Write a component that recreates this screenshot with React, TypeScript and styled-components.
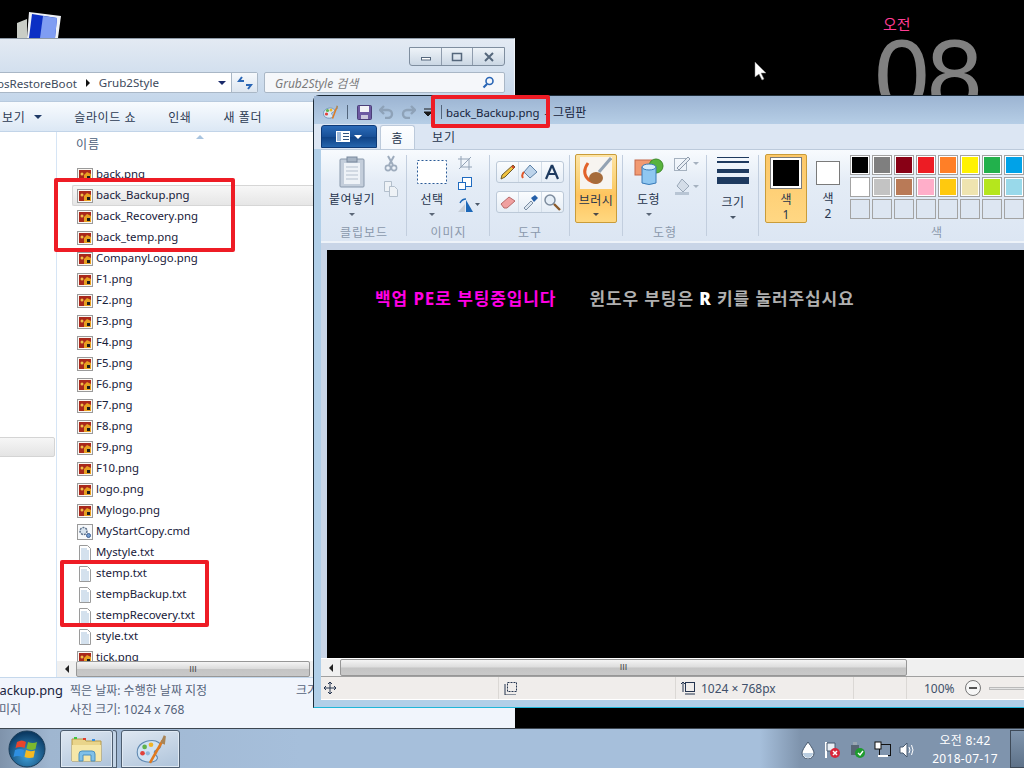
import React from 'react';
import styled, { createGlobalStyle } from 'styled-components';

const Global = createGlobalStyle`
  html, body { margin: 0; padding: 0; background: #000; overflow: hidden; }
  * { box-sizing: border-box; }
  body { font-family: "Noto Sans", "Noto Sans CJK KR", sans-serif; font-size: 12px; color: #1e2a3c; }
`;

const KR = `"Noto Sans", "Noto Sans CJK KR", sans-serif`;

const Desktop = styled.div`position: relative; width: 1024px; height: 768px; overflow: hidden; background: #000;`;
const DesktopIcon = styled.svg`position: absolute; left: 16px; top: 10px;`;
const AmPm = styled.div`position: absolute; left: 883px; top: 14px; color: #ff3d94; font-size: 15px; line-height: 20px;`;
const BigClock = styled.div`position: absolute; left: 872px; top: 31px; color: #808080; font: 400 94px/94px "DejaVu Sans", sans-serif; letter-spacing: -7px;`;
const Cursor = styled.svg`position: absolute; left: 754px; top: 61px; z-index: 9;`;

/* explorer */
const Explorer = styled.section`
  position: absolute; left: -200px; top: 38px; width: 715px; height: 690px;
  display: flex; flex-direction: column; border-top: 1px solid #8d99a6; border-right: 1px solid #eef3f9;
  background: linear-gradient(#e3eaf3, #c3d6ea 64px);
`;
const ExplorerTitle = styled.div`height: 31px; display: flex; justify-content: flex-end; padding: 8px 9px 0 0;`;
const WinControls = styled.div`display: flex; height: 19px; border: 1px solid #7f8e9f; border-radius: 0 0 3px 3px; background: linear-gradient(#eef3f8, #cbd7e4);`;
const WinBtn = styled.div<{ $w: number }>`
  width: ${p => p.$w}px; display: flex; align-items: center; justify-content: center;
  border-right: 1px solid #8f9cad; &:last-child { border-right: 0; }
`;
const AddressRow = styled.div`height: 32px; display: flex; gap: 6px; padding: 2px 9px 8px 0;`;
const AddressBox = styled.div`flex: 0 0 458px; display: flex; align-items: center; background: #fff; border: 1px solid #a9b7c6; border-radius: 2px; color: #3c4a5c;`;
const PathText = styled.div`flex: 0 0 358px; display: flex; justify-content: flex-end; gap: 9px; align-items: center; white-space: nowrap; overflow: hidden; font-size: 11.6px;`;
const Spacer = styled.div`flex: 1;`;
const DropTri = styled.i<{ $c?: string; $s?: number }>`
  display: inline-block; width: 0; height: 0; flex: none;
  border-left: ${p => p.$s ?? 4}px solid transparent; border-right: ${p => p.$s ?? 4}px solid transparent;
  border-top: ${p => p.$s ?? 4}px solid ${p => p.$c ?? '#1a2a6a'};
`;
const RightTri = styled.i`border-top: 4px solid transparent; border-bottom: 4px solid transparent; border-left: 4px solid #111; flex: none;`;
const RefreshBtn = styled.div`width: 26px; height: 100%; margin-left: 5px; border-left: 1px solid #a9b7c6; display: flex; align-items: center; justify-content: center; background: linear-gradient(#f6f9fc, #dde6f0);`;
const SearchBox = styled.div`flex: 1; display: flex; align-items: center; justify-content: space-between; padding: 0 9px 0 10px; background: #f5f7fa; border: 1px solid #a9b7c6; border-radius: 2px; color: #7a7a7a; font-style: italic;`;
const ExplorerToolbar = styled.div`height: 31px; display: flex; align-items: center; gap: 32px; padding-left: 202px; background: linear-gradient(#f8fbfe, #dce8f5); border-top: 1px solid #b8cade; border-bottom: 1px solid #c2d4e8; color: #2b3a52;`;
const ToolItem = styled.span`display: inline-flex; align-items: center; gap: 9px; letter-spacing: .6px;`;
const ExplorerMain = styled.div`height: 545px; display: flex; background: #fff;`;
const NavPane = styled.nav`flex: 0 0 257px; padding-top: 305px; border-right: 1px solid #d6e5f5; overflow: hidden;`;
const NavRow = styled.div<{ $end?: number; $sel?: boolean }>`
  height: ${p => (p.$sel ? 20 : 21)}px; display: flex; align-items: center; justify-content: flex-end; white-space: nowrap;
  padding-right: ${p => p.$end ?? 0}px; color: #26324a;
  margin-right: ${p => (p.$sel ? 1 : 0)}px; margin-bottom: ${p => (p.$sel ? 1 : 0)}px;
  ${p => p.$sel && 'background: linear-gradient(#f6f6f6, #e4e4e4); border: 1px solid #d4d4d4; border-radius: 2px;'}
`;
const ListCol = styled.div`flex: 1; min-width: 0; display: flex; flex-direction: column; position: relative;`;
const ListHead = styled.div`height: 32px; padding: 4px 0 0 19px; color: #4c607a; font-size: 12px; line-height: 18px; letter-spacing: 1px;`;
const SortArrow = styled.i`position: absolute; left: 139px; top: 3px; border-left: 4px solid transparent; border-right: 4px solid transparent; border-bottom: 4px solid #a9c4df;`;
const Rows = styled.div`flex: 1; overflow: hidden; padding-left: 15px; font-size: 11.4px;`;
const FileRow = styled.div<{ $sel?: boolean }>`
  height: 21px; display: flex; align-items: center; gap: 3px; padding-left: ${p => (p.$sel ? 4 : 5)}px; white-space: nowrap; color: #17203a;
  ${p => p.$sel && 'background: linear-gradient(#f7f7f7, #e6e6e6); border: 1px solid #d6d6d6; border-right: 0; border-radius: 2px;'}
`;
const FileName = styled.span`margin-top: -2px;`;
const HScroll = styled.div<{ $h: number }>`
  height: ${p => p.$h}px; flex: none; display: flex; align-items: center; background: #f0f0f0;
`;
const ScrollBtn = styled.div<{ $w: number }>`flex: 0 0 ${p => p.$w}px; display: flex; align-items: center; justify-content: center;`;
const LeftTri = styled.i`border-top: 4px solid transparent; border-bottom: 4px solid transparent; border-right: 4px solid #222;`;
const Thumb = styled.div<{ $w: number }>`
  flex: 0 0 ${p => p.$w}px; height: 100%; border: 1px solid #979797; border-radius: 2px; display: flex; align-items: center; justify-content: center;
  background: linear-gradient(#f4f4f4, #dcdcdc 48%, #c4c4c4 52%, #c9c9c9);
  color: #444; font: 9px/9px "Liberation Sans", sans-serif; letter-spacing: 0;
`;
const Details = styled.div`height: 51px; flex: none; display: grid; grid-template-columns: 270px 226px 1fr; grid-auto-rows: 19px; padding-top: 3px; background: #f1f5fc; border-top: 1px solid #c5d8ec; color: #55637a; white-space: nowrap;`;
const DetailName = styled.div<{ $pr: number; $dark?: boolean }>`text-align: right; padding-right: ${p => p.$pr}px; font-size: ${p => (p.$dark ? 12.9 : 12)}px; color: ${p => (p.$dark ? '#1b2440' : '#55637a')};`;
const DetailValue = styled.div``;

/* paint */
const Paint = styled.section`
  position: absolute; left: 313px; top: 95px; width: 760px; height: 613px; display: flex; flex-direction: column;
  background: #b1cfe8; border: 1px solid #1d2b38; border-bottom: 1px solid #1fb6d8; border-radius: 6px 0 0 0;
`;
const QuickBar = styled.div`height: 28px; flex: none; display: flex; align-items: center; padding: 4px 0 0 9px; background: linear-gradient(#9cb4d2, #b6cee6); color: #16233c;`;
const QuickIcon = styled.svg<{ $mr: number }>`flex: none; margin-right: ${p => p.$mr}px;`;
const QuickSep = styled.span<{ $mr: number }>`width: 1px; height: 14px; background: #52657c; margin-right: ${p => p.$mr}px;`;
const PaintTitle = styled.span`white-space: nowrap; font-size: 11.4px; word-spacing: 2px; margin-left: -2px;`;
const TitleApp = styled.span`font-size: 12px;`;
const TabRow = styled.div`height: 25px; flex: none; display: flex; align-items: flex-end; padding-left: 7px; background: #dce6f3; color: #25344c;`;
const AppBtn = styled.div`width: 56px; height: 23px; margin: 0 3px 1px 0; border: 1px solid #0d3a78; border-radius: 3px 3px 0 0; display: flex; align-items: center; justify-content: center; gap: 4px; background: linear-gradient(#2a6bb9, #185098 50%, #0f4387 55%, #2565ad);`;
const Tab = styled.div<{ $on?: boolean }>`
  width: ${p => (p.$on ? 35 : 58)}px; height: 24px; display: flex; align-items: center; justify-content: center; letter-spacing: 1px;
  ${p => p.$on && 'background: linear-gradient(#fdfeff, #f3f7fc); border: 1px solid #bccadb; border-bottom: 0; border-radius: 3px 3px 0 0;'}
`;
const Ribbon = styled.div`height: 94px; flex: none; display: flex; margin-left: 7px; padding-top: 5px; background: linear-gradient(#f8fbfe, #e4ecf6 35%, #dce6f3); border-top: 1px solid #bccadb; border-bottom: 2px solid #eef3f9;`;
const Group = styled.div<{ $w: number; $last?: boolean }>`
  flex: 0 0 ${p => p.$w}px; height: 86px; display: flex; flex-direction: column;
  ${p => !p.$last && 'background: linear-gradient(#c2cede, #c2cede) right top / 1px 81px no-repeat;'}
`;
const GroupBody = styled.div`flex: 1; min-height: 0; display: flex; position: relative;`;
const GroupLabel = styled.div`height: 19px; padding-top: 3px; text-align: center; color: #8a98ab; line-height: 15px; letter-spacing: 1px;`;
const BigTool = styled.div<{ $w: number; $on?: boolean }>`
  flex: 0 0 ${p => p.$w}px; height: 66px; display: flex; flex-direction: column; align-items: center; color: #26344c; line-height: 15px; letter-spacing: .5px; white-space: nowrap; border-radius: 2px;
  ${p => p.$on && 'margin: -1px 0 0 5px; height: 69px !important; background: linear-gradient(#fde4a6, #fbcf6f 45%, #ffc45e 60%, #ffd880); border: 1px solid #c99c3a;'}
`;
const BigIcon = styled.div<{ $h: number }>`height: ${p => p.$h}px; flex: none; display: flex; align-items: center; justify-content: center;`;
const ToolText = styled.span<{ $mt: number }>`margin-top: ${p => p.$mt}px;`;
const Tri = styled(DropTri)<{ $mt: number }>`margin-top: ${p => p.$mt}px;`;
const MiniCol = styled.div<{ $gap: number; $start?: boolean }>`display: flex; flex-direction: column; gap: ${p => p.$gap}px; align-items: ${p => (p.$start ? 'flex-start' : 'center')}; flex: none;`;
const ToolGrid = styled.div`display: flex; flex-direction: column; gap: 8px; padding: 6px 0 0 6px;`;
const ToolStrip = styled.div`display: flex; height: 22px; width: 68px; border: 1px solid #bcc9d8; border-radius: 3px; background: linear-gradient(#fafcfe, #e5edf6);`;
const ToolCell = styled.div`flex: 1; display: flex; align-items: center; justify-content: center; border-right: 1px solid #d3dde8; &:last-child { border-right: 0; }`;
const SizeLines = styled.div`display: flex; flex-direction: column; width: 32px; height: 36px; padding-top: 2px;`;
const SizeLine = styled.i<{ $h: number; $mb: number }>`display: block; flex: none; height: ${p => p.$h}px; margin-bottom: ${p => p.$mb}px; background: #1e3a5f;`;
const ColorBig = styled.div<{ $on?: boolean }>`
  flex: 0 0 42px; height: 69px; margin-top: -1px; display: flex; flex-direction: column; align-items: center; line-height: 15px; color: #27364e;
  ${p => p.$on && 'padding-top: 2px; margin-left: 6px; border: 1px solid #c99c3a; border-radius: 2px; background: linear-gradient(#fdc868, #ffd783);'}
`;
const ColorWell = styled.div<{ $s: number; $bg: string; $mt: number }>`
  width: ${p => p.$s}px; height: ${p => p.$s}px; flex: none; margin: ${p => p.$mt}px 0 3px; background: ${p => p.$bg};
  border: 1px solid #7a7a7a; box-shadow: inset 0 0 0 2px #fff;
`;
const ColorCaption = styled.span<{ $mt?: number }>`margin-top: ${p => p.$mt ?? 0}px;`;
const Palette = styled.div`display: grid; grid-template-columns: repeat(10, 20px); grid-auto-rows: 20px; gap: 2px; margin-left: 1px;`;
const Swatch = styled.div<{ $c?: string }>`border: 1px solid #a3a3a3; box-shadow: inset 0 0 0 1px #fff; background: ${p => p.$c ?? '#dde6f2'};
  ${p => !p.$c && 'box-shadow: none;'}`;
const CanvasArea = styled.div`flex: 1; min-height: 0; margin-left: 7px; padding: 7px 0 0 6px; background: #c9d5e7;`;
const Canvas = styled.div`height: 100%; background: #000; padding: 36px 0 0 48px; display: flex; gap: 33px; font: bold 17px/26px ${KR}; letter-spacing: .9px; white-space: nowrap;`;
const Magenta = styled.span`color: #ff00e4;`;
const Gray = styled.span`color: #b0b0b0; b { color: #fff; }`;
const PaintScroll = styled(HScroll)`margin-left: 7px; border-top: 1px solid #fff;`;
const PaintStatus = styled.div`height: 24px; flex: none; margin-left: 7px; display: flex; background: #f0edeb; border-top: 1px solid #a0a0a0; color: #40506a; border-bottom: 1px solid #fff;`;
const StatusCell = styled.div<{ $w: number; $pl: number }>`flex: 0 0 ${p => p.$w}px; display: flex; align-items: center; gap: 6px; padding-left: ${p => p.$pl}px; border-right: 1px solid #dbd8d5; white-space: nowrap;`;
const Frame = styled.div`height: 7px; flex: none;`;
const ZoomBtn = styled.span`width: 16px; height: 16px; margin-left: 4px; border: 1px solid #777; border-radius: 50%; display: flex; align-items: center; justify-content: center; background: #f6f6f6; &::before { content: ""; width: 8px; height: 2px; background: #555; }`;
const ZoomTrack = styled.span`width: 80px; height: 3px; margin-left: 2px; background: #e4e4e4; border: 1px solid #bbb;`;

/* annotation */
const RedBox = styled.div<{ $x: number; $y: number; $w: number; $h: number }>`
  position: absolute; left: ${p => p.$x}px; top: ${p => p.$y}px; width: ${p => p.$w}px; height: ${p => p.$h}px;
  border: 4px solid #ee1c25; border-radius: 2px; z-index: 5;
`;

/* taskbar */
const Taskbar = styled.footer`
  position: absolute; left: 0; right: 0; bottom: 0; height: 40px; display: flex; align-items: stretch; padding-top: 1px;
  border-top: 1px solid #3d4650;
  background: linear-gradient(90deg, #7f93ab 0, #9fb6d0 50px, #a6bfdb 300px, #a6bfdb 760px, #7f94ad 800px, #7f94ad 100%);
`;
const StartOrb = styled.div`flex: 0 0 60px; display: flex; align-items: center; justify-content: center; padding-right: 6px;`;
const TaskBtn = styled.div<{ $w: number }>`
  flex: 0 0 ${p => p.$w}px; display: flex; align-items: center; justify-content: center;
  border: 1px solid #4d5d6f; border-radius: 3px 3px 0 0; box-shadow: inset 0 0 0 1px #dfe9f3;
  background: linear-gradient(160deg, #dfe8f2, #aec3da);
`;
const StackEdge = styled.div`flex: 0 0 4px; margin-right: 4px; border: 1px solid #4d5d6f; border-left: 0; border-radius: 0 3px 0 0; background: #c3d4e6;`;
const TaskSpace = styled.div`flex: 1;`;
const Tray = styled.div`display: flex; align-items: center; gap: 8px; padding-right: 9px; padding-top: 1px;`;
const TrayIcon = styled.svg``;
const Clock = styled.div`width: 80px; margin-right: 5px; text-align: center; color: #fff; line-height: 18px; font-size: 12px; padding-top: 2px; white-space: nowrap; letter-spacing: .3px;`;
const ShowDesk = styled.div`flex: 0 0 14px; border: 1px solid #3e4a58; border-right: 0; background: linear-gradient(#8095ad, #5e7289);`;

const ImgIcon = () => (
  <svg width="16" height="16" viewBox="0 0 16 16" style={{ flex: 'none' }}>
    <rect x=".5" y="1.500" width="15" height="13" fill="#fbf7f2" stroke="#9a9a9a" />
    <rect x="2" y="3" width="12" height="10" fill="#a9281b" />
    <path d="M7 13V8l3-3 4 2v6z" fill="#e7a021" />
    <circle cx="5" cy="7" r="1.500" fill="#f0c04a" />
    <rect x="10" y="9" width="3" height="3" fill="#1d1d1d" />
  </svg>
);
const TxtIcon = () => (
  <svg width="16" height="16" viewBox="0 0 16 16" style={{ flex: 'none' }}>
    <path d="M2.5.5h8l3 3v12h-11z" fill="#fff" stroke="#9a9a9a" />
    <path d="M4 4h6M4 6h8M4 8h8M4 10h8M4 12h8M4 14h8" stroke="#a9c3dc" />
  </svg>
);
const CmdIcon = () => (
  <svg width="16" height="16" viewBox="0 0 16 16" style={{ flex: 'none' }}>
    <rect x=".5" y=".5" width="15" height="15" fill="#f7f9fb" stroke="#9a9a9a" />
    <circle cx="6.500" cy="7" r="3.500" fill="#d7e3ee" stroke="#5b6f89" strokeWidth="1.500" strokeDasharray="2 1" />
    <circle cx="11.500" cy="11.500" r="2" fill="#6f9bd1" stroke="#3e5e90" />
  </svg>
);

type F = { n: string; t: 'i' | 't' | 'c'; sel?: boolean };
const files: F[] = [
  { n: 'back.png', t: 'i' }, { n: 'back_Backup.png', t: 'i', sel: true }, { n: 'back_Recovery.png', t: 'i' }, { n: 'back_temp.png', t: 'i' },
  { n: 'CompanyLogo.png', t: 'i' }, { n: 'F1.png', t: 'i' }, { n: 'F2.png', t: 'i' }, { n: 'F3.png', t: 'i' }, { n: 'F4.png', t: 'i' },
  { n: 'F5.png', t: 'i' }, { n: 'F6.png', t: 'i' }, { n: 'F7.png', t: 'i' }, { n: 'F8.png', t: 'i' }, { n: 'F9.png', t: 'i' },
  { n: 'F10.png', t: 'i' }, { n: 'logo.png', t: 'i' }, { n: 'Mylogo.png', t: 'i' }, { n: 'MyStartCopy.cmd', t: 'c' }, { n: 'Mystyle.txt', t: 't' },
  { n: 'stemp.txt', t: 't' }, { n: 'stempBackup.txt', t: 't' }, { n: 'stempRecovery.txt', t: 't' }, { n: 'style.txt', t: 't' }, { n: 'tick.png', t: 'i' },
];
const palette = ['#000000', '#7f7f7f', '#880015', '#ed1c24', '#ff7f27', '#fff200', '#22b14c', '#00a2e8', '#3f48cc', '#a349a4',
  '#ffffff', '#c3c3c3', '#b97a57', '#ffaec9', '#ffc90e', '#efe4b0', '#b5e61d', '#99d9ea', '#7092be', '#c8bfe7'];

const PaletteIcon = ({ s }: { s: number }) => (
  <svg width={s} height={s} viewBox="0 0 32 32">
    <path d="M3 19c0-7 7-11 14-11 5 0 9 3 8 6-1 3-6 2-6 5s4 3 3 6-6 4-11 3C6 27 3 24 3 19z" fill="#cfe2f3" stroke="#5d87b0" />
    <circle cx="8" cy="20" r="2.200" fill="#e0413a" /><circle cx="10" cy="14" r="2.200" fill="#5fb24b" /><circle cx="16" cy="12" r="2.200" fill="#f0b429" /><circle cx="13" cy="20" r="2" fill="#8fb9de" />
    <path d="M15 29 27 8" stroke="#e07a1f" strokeWidth="2.400" />
    <path d="M25 10l3-7 2 1-1 8z" fill="#a98455" />
  </svg>
);

export default function App() {
  return (
    <Desktop>
      <Global />
      <DesktopIcon width="46" height="28" viewBox="0 0 46 28">
        <path d="M1 13l10-4v19H1z" fill="#c9cdc6" />
        <path d="M13 2l32 4-3 22H11z" fill="#eef1f5" />
        <path d="M16 4l25 4-2 20H13z" fill="#0b2fc4" />
        <path d="M27 6l14 2-2 20H24z" fill="#7f9df2" />
      </DesktopIcon>
      <AmPm>오전</AmPm>
      <BigClock>08</BigClock>
      <Cursor width="14" height="20" viewBox="0 0 14 20"><path d="M1 1v15l4-3 3 6 2-1-3-6h5z" fill="#fff" stroke="#888" strokeWidth=".5" /></Cursor>

      <Explorer>
        <ExplorerTitle>
          <WinControls>
            <WinBtn $w={32}><svg width="12" height="8"><rect x="1.500" y="4.500" width="9" height="2.500" fill="#fff" stroke="#55677c" /></svg></WinBtn>
            <WinBtn $w={31}><svg width="12" height="10"><rect x="1.500" y="1.500" width="9" height="7" fill="none" stroke="#55677c" strokeWidth="1.500" /></svg></WinBtn>
            <WinBtn $w={31}><svg width="12" height="10"><path d="M2 1l8 8M10 1 2 9" stroke="#55677c" strokeWidth="2" /></svg></WinBtn>
          </WinControls>
        </ExplorerTitle>
        <AddressRow>
          <AddressBox>
            <PathText>
              <span>컴퓨터 ▸ 부팅 ▸ BiosRestoreBoot</span>
              <RightTri />
              <span>Grub2Style</span>
            </PathText>
            <Spacer />
            <DropTri />
            <RefreshBtn>
              <svg width="16" height="14" viewBox="0 0 16 14"><path d="M7 5H2l3-4M9 9h5l-3 4" fill="none" stroke="#2a66b5" strokeWidth="2" /></svg>
            </RefreshBtn>
          </AddressBox>
          <SearchBox>
            <span>Grub2Style 검색</span>
            <svg width="13" height="13" viewBox="0 0 13 13"><circle cx="7.500" cy="5" r="3.500" fill="none" stroke="#2a66b5" strokeWidth="1.600" /><path d="M5 8 1.500 11.500" stroke="#2a66b5" strokeWidth="2.200" /></svg>
          </SearchBox>
        </AddressRow>
        <ExplorerToolbar>
          <ToolItem>보기<DropTri $c="#1f3a66" /></ToolItem>
          <ToolItem>슬라이드 쇼</ToolItem>
          <ToolItem>인쇄</ToolItem>
          <ToolItem>새 폴더</ToolItem>
        </ExplorerToolbar>
        <ExplorerMain>
          <NavPane>
            <NavRow $sel />
            <NavRow />
            <NavRow $end={211}>로컬 디스크 (C:) WinPE</NavRow>
            <NavRow />
            <NavRow $end={254}>시스템 예약 (D:)</NavRow>
            <NavRow $end={247}>DVD RW 드라이브 (H:)</NavRow>
          </NavPane>
          <ListCol>
            <SortArrow />
            <ListHead>이름</ListHead>
            <Rows>
              {files.map(f => (
                <FileRow key={f.n} $sel={f.sel}>
                  {f.t === 'i' ? <ImgIcon /> : f.t === 't' ? <TxtIcon /> : <CmdIcon />}
                  <FileName>{f.n}</FileName>
                </FileRow>
              ))}
            </Rows>
            <HScroll $h={16}>
              <ScrollBtn $w={19}><LeftTri /></ScrollBtn>
              <Thumb $w={234}>III</Thumb>
            </HScroll>
          </ListCol>
        </ExplorerMain>
        <Details>
          <DetailName $dark $pr={7}>back_Backup.png</DetailName>
          <DetailValue>찍은 날짜: 수행한 날짜 지정</DetailValue>
          <DetailValue>크기:</DetailValue>
          <DetailName $pr={49}>PNG 이미지</DetailName>
          <DetailValue>사진 크기: 1024 x 768</DetailValue>
        </Details>
      </Explorer>

      <Paint>
        <QuickBar>
          <QuickIcon $mr={9} width="15" height="15" viewBox="0 0 30 30"><path d="M1 17c0-7 7-11 14-11 5 0 9 3 8 6-1 3-6 2-6 5s4 3 3 6-6 4-11 3C4 25 1 22 1 17z" fill="#dbe8f4" stroke="#5d87b0" strokeWidth="1.500" /><circle cx="7" cy="18" r="3.200" fill="#e0413a" /><circle cx="9" cy="11" r="3.200" fill="#5fb24b" /><circle cx="16" cy="10" r="3" fill="#f0b429" /><path d="M19 27 27 6" stroke="#e07a1f" strokeWidth="3" /><path d="M26 7l1-6 3 1-1 6z" fill="#a98455" /></QuickIcon>
          <QuickSep $mr={9} />
          <QuickIcon $mr={7} width="15" height="15" viewBox="0 0 15 15"><rect x=".5" y=".5" width="14" height="14" rx="1" fill="#6d5aa2" stroke="#4b3f78" /><rect x="3" y="1" width="9" height="6" fill="#f2f2f6" /><rect x="4" y="10" width="7" height="4" fill="#cbc7dc" /></QuickIcon>
          <QuickIcon $mr={7} width="15" height="14" viewBox="0 0 15 14"><path d="M2 5h7a4 4 0 0 1 0 8H6M5 1 1 5l4 4" fill="none" stroke="#8ea2b8" strokeWidth="2.400" /></QuickIcon>
          <QuickIcon $mr={8} width="15" height="14" viewBox="0 0 15 14"><path d="M13 5H6a4 4 0 0 0 0 8h3M10 1l4 4-4 4" fill="none" stroke="#8ea2b8" strokeWidth="2.400" /></QuickIcon>
          <QuickIcon $mr={9} width="8" height="8" viewBox="0 0 8 8"><path d="M0 1h8M0 4h8l-4 4z" stroke="#1b1b1b" fill="#1b1b1b" /></QuickIcon>
          <QuickSep $mr={6} />
          <PaintTitle>back_Backup.png - <TitleApp>그림판</TitleApp></PaintTitle>
        </QuickBar>
        <TabRow>
          <AppBtn>
            <svg width="14" height="11" viewBox="0 0 14 11"><rect width="14" height="11" fill="#fff" /><rect x="1" y="1" width="4" height="9" fill="#9db9da" /><path d="M7 2.500h6M7 5.500h6M7 8.500h6" stroke="#33557f" /></svg>
            <DropTri $c="#fff" />
          </AppBtn>
          <Tab $on>홈</Tab>
          <Tab>보기</Tab>
        </TabRow>
        <Ribbon>
          <Group $w={86}>
            <GroupBody>
              <BigTool $w={62}>
                <BigIcon $h={33}><svg width="26" height="32" viewBox="0 0 26 32"><rect x="1" y="3" width="24" height="28" rx="1" fill="#c4cedb" stroke="#8998ab" /><rect x="5" y="7" width="16" height="21" fill="#eef2f7" /><path d="M7 11h12M7 15h12M7 19h12M7 23h12" stroke="#b4bfcd" /><rect x="8" y="1" width="10" height="5" fill="#a7b4c4" stroke="#7a899d" /></svg></BigIcon>
                <ToolText $mt={4}>붙여넣기</ToolText>
                <Tri $c="#5b6777" $s={3} $mt={6} />
              </BigTool>
              <MiniCol $gap={8}>
                <svg width="16" height="18" viewBox="0 0 16 18"><path d="M5 1l5 9M11 1 6 10" stroke="#9eacbd" strokeWidth="2" /><circle cx="5" cy="13" r="2.600" fill="none" stroke="#9eacbd" strokeWidth="1.600" /><circle cx="11" cy="13" r="2.600" fill="none" stroke="#9eacbd" strokeWidth="1.600" /></svg>
                <svg width="16" height="16" viewBox="0 0 16 16"><path d="M1.500.5h7v10h-7z" fill="#eef2f6" stroke="#b3bfcc" /><path d="M6.500 5.500h5l3 3v7h-8z" fill="#eef2f6" stroke="#b3bfcc" /></svg>
              </MiniCol>
            </GroupBody>
            <GroupLabel>클립보드</GroupLabel>
          </Group>
          <Group $w={83}>
            <GroupBody>
              <BigTool $w={50}>
                <BigIcon $h={33}><svg width="30" height="24" viewBox="0 0 30 24"><rect x=".5" y=".5" width="29" height="23" fill="#fff" stroke="#2a5a96" strokeDasharray="2 2" /></svg></BigIcon>
                <ToolText $mt={4}>선택</ToolText>
                <Tri $c="#5b6777" $s={3} $mt={6} />
              </BigTool>
              <MiniCol $gap={5} $start>
                <svg width="16" height="16" viewBox="0 0 16 16"><path d="M4 1v11h11M1 4h11v11M14 2 2 14" fill="none" stroke="#93a3b6" /></svg>
                <svg width="16" height="16" viewBox="0 0 16 16"><rect x="5.500" y="1.500" width="9" height="9" fill="#fff" stroke="#1f6bc0" /><rect x="1.500" y="6.500" width="7" height="7" fill="#fff" stroke="#1f6bc0" /></svg>
                <svg width="24" height="16" viewBox="0 0 24 16"><path d="M1 15 8 7v8z" fill="#c5cdd6" /><path d="M9 3l7 12H9z" fill="#1d68b8" /><path d="M3 6q2-4 6-4" fill="none" stroke="#1d68b8" strokeWidth="1.400" /><path d="M18 6h5l-2.500 3z" fill="#4d5a6b" /></svg>
              </MiniCol>
            </GroupBody>
            <GroupLabel>이미지</GroupLabel>
          </Group>
          <Group $w={80}>
            <GroupBody>
              <ToolGrid>
                <ToolStrip>
                  <ToolCell><svg width="18" height="18" viewBox="0 0 18 18"><path d="M14 2l2 2L6 14l-4 2 1-4z" fill="#f0c23e" stroke="#6d5a2a" /><path d="M13 3l2 2" stroke="#d2452f" strokeWidth="2" /></svg></ToolCell>
                  <ToolCell><svg width="18" height="18" viewBox="0 0 18 18"><path d="M9 2l7 7-7 6-6-6z" fill="#bcd3ea" stroke="#5f83a8" /><path d="M3 9q-3 3-1 6" fill="none" stroke="#e0582a" strokeWidth="2" /></svg></ToolCell>
                  <ToolCell><svg width="18" height="18" viewBox="0 0 18 18"><path d="M9 2 3 16M9 2l6 14M5.500 11h7" fill="none" stroke="#1e3a5f" strokeWidth="2.200" /></svg></ToolCell>
                </ToolStrip>
                <ToolStrip>
                  <ToolCell><svg width="18" height="18" viewBox="0 0 18 18"><path d="M2 11 10 4l6 4-8 7H5z" fill="#f0a0a0" stroke="#b86a6a" /></svg></ToolCell>
                  <ToolCell><svg width="18" height="18" viewBox="0 0 18 18"><path d="M3 15l7-7 2 2-7 7z" fill="#dbe5ef" stroke="#7a8da3" /><path d="M10 5l4-3 3 3-4 4z" fill="#245fa8" /></svg></ToolCell>
                  <ToolCell><svg width="18" height="18" viewBox="0 0 18 18"><circle cx="7" cy="7" r="5" fill="#e5eef7" stroke="#7d8c9e" strokeWidth="1.500" /><path d="M11 11l6 6" stroke="#8a5a2a" strokeWidth="2.400" /></svg></ToolCell>
                </ToolStrip>
              </ToolGrid>
            </GroupBody>
            <GroupLabel>도구</GroupLabel>
          </Group>
          <Group $w={53}>
            <GroupBody>
              <BigTool $w={42} $on>
                <BigIcon $h={36}><svg width="32" height="32" viewBox="0 0 32 32"><rect width="32" height="32" fill="#f7f4f0" /><path d="M8 6q-7 10 1 17 6 4 10 1" fill="none" stroke="#e2622b" strokeWidth="3" /><path d="M31 1 19 15" stroke="#93a2b2" strokeWidth="3" /><ellipse cx="16" cy="21" rx="7" ry="6" fill="#a66b3a" /></svg></BigIcon>
                <ToolText $mt={2}>브러시</ToolText>
                <Tri $c="#4a4a4a" $s={3} $mt={5} />
              </BigTool>
            </GroupBody>
            <GroupLabel />
          </Group>
          <Group $w={84}>
            <GroupBody>
              <BigTool $w={51}>
                <BigIcon $h={33}><svg width="30" height="28" viewBox="0 0 30 28"><rect x="1" y="2" width="17" height="15" fill="#f19a72" stroke="#c4694a" /><circle cx="22" cy="8" r="7" fill="#57b33d" stroke="#3c8a28" /><path d="M8 9h14v16q-7 3-14 0z" fill="#8fc7f1" stroke="#3a7bb8" /><ellipse cx="15" cy="9" rx="7" ry="3" fill="#d7ecfb" stroke="#3a7bb8" /></svg></BigIcon>
                <ToolText $mt={4}>도형</ToolText>
                <Tri $c="#5b6777" $s={3} $mt={6} />
              </BigTool>
              <MiniCol $gap={5}>
                <svg width="26" height="18" viewBox="0 0 26 18"><rect x=".5" y="3.500" width="12" height="12" fill="none" stroke="#a5b1bf" /><path d="M3 13l11-11 2 2L5 15z" fill="#e7edf4" stroke="#8d9aab" /><path d="M19 7h6l-3 3z" fill="#a5b1bf" /></svg>
                <svg width="26" height="18" viewBox="0 0 26 18"><path d="M8 1l7 7-6 6-6-6z" fill="#d4dde8" stroke="#9aa8b8" /><rect x="1" y="14" width="14" height="3" fill="#b8c5d4" /><path d="M19 7h6l-3 3z" fill="#a5b1bf" /></svg>
              </MiniCol>
            </GroupBody>
            <GroupLabel>도형</GroupLabel>
          </Group>
          <Group $w={52}>
            <GroupBody>
              <BigTool $w={52}>
                <SizeLines><SizeLine $h={1} $mb={3} /><SizeLine $h={2} $mb={6} /><SizeLine $h={4} $mb={4} /><SizeLine $h={7} $mb={0} /></SizeLines>
                <ToolText $mt={4}>크기</ToolText>
                <Tri $c="#4a5768" $s={3} $mt={6} />
              </BigTool>
            </GroupBody>
            <GroupLabel />
          </Group>
          <Group $w={356} $last>
            <GroupBody>
              <ColorBig $on>
                <ColorWell $s={32} $bg="#000" $mt={0} />
                <ColorCaption>색</ColorCaption><ColorCaption>1</ColorCaption>
              </ColorBig>
              <ColorBig>
                <ColorWell $s={24} $bg="#fff" $mt={7} />
                <ColorCaption $mt={3}>색</ColorCaption><ColorCaption>2</ColorCaption>
              </ColorBig>
              <Palette>
                {palette.map((c, i) => <Swatch key={i} $c={c} />)}
                {Array.from({ length: 10 }, (_, i) => <Swatch key={`e${i}`} />)}
              </Palette>
            </GroupBody>
            <GroupLabel>색</GroupLabel>
          </Group>
        </Ribbon>
        <CanvasArea>
          <Canvas>
            <Magenta>백업 PE로 부팅중입니다</Magenta>
            <Gray>윈도우 부팅은 <b>R</b> 키를 눌러주십시요</Gray>
          </Canvas>
        </CanvasArea>
        <PaintScroll $h={18}>
          <ScrollBtn $w={19}><LeftTri /></ScrollBtn>
          <Thumb $w={567}>III</Thumb>
        </PaintScroll>
        <PaintStatus>
          <StatusCell $w={178} $pl={2}><svg width="14" height="14" viewBox="0 0 14 14"><path d="M7 1v12M1 7h12M5 3l2-2 2 2M5 11l2 2 2-2M3 5 1 7l2 2M11 5l2 2-2 2" fill="none" stroke="#24344f" /></svg></StatusCell>
          <StatusCell $w={177} $pl={5}><svg width="14" height="14" viewBox="0 0 14 14"><rect x="3.500" y="1.500" width="9" height="9" fill="none" stroke="#24344f" strokeDasharray="2 1" /><path d="M1 3v11h11" fill="none" stroke="#24344f" /></svg></StatusCell>
          <StatusCell $w={178} $pl={5}><svg width="14" height="14" viewBox="0 0 14 14"><rect x="4.500" y="1.500" width="9" height="9" fill="none" stroke="#24344f" /><path d="M2 1v10M0 3l2-2 2 2M4 13h10" fill="none" stroke="#24344f" /></svg><span>1024 × 768px</span></StatusCell>
          <StatusCell $w={53} $pl={0} />
          <StatusCell $w={120} $pl={17}>100%<ZoomBtn /><ZoomTrack /></StatusCell>
        </PaintStatus>
        <Frame />
      </Paint>

      <RedBox $x={54} $y={178} $w={181} $h={74} />
      <RedBox $x={60} $y={560} $w={149} $h={67} />
      <RedBox $x={431} $y={95} $w={119} $h={33} />

      <Taskbar>
        <StartOrb>
          <svg width="38" height="38" viewBox="0 0 38 38">
            <defs><radialGradient id="orb" cx="50%" cy="70%" r="65%"><stop offset="0" stopColor="#3f9fd8" /><stop offset="1" stopColor="#0b3a63" /></radialGradient></defs>
            <circle cx="19" cy="19" r="18" fill="url(#orb)" stroke="#1a3c58" />
            <path d="M9 12q5-3 9 0l-1.500 6q-4-2-9 0z" fill="#e8452c" />
            <path d="M20 12q5 2 9 0l-1.500 7q-5 2-9-.500z" fill="#7cb82f" />
            <path d="M7 20q5-2 9 0l-1.500 7q-5-2-9 0z" fill="#2f8fe0" />
            <path d="M18 20q4 2 9 .500l-1.500 7q-5 1-9-.500z" fill="#f5b921" />
          </svg>
        </StartOrb>
        <TaskBtn $w={53}>
          <svg width="32" height="32" viewBox="0 0 32 32">
            <path d="M1 6h12l2 2h15v20H1z" fill="#e9d48a" stroke="#b59a4a" />
            <rect x="3" y="4" width="3" height="2" fill="#3ec33e" /><rect x="12" y="5" width="3" height="2" fill="#e04030" /><rect x="21" y="6" width="3" height="2" fill="#3a8fe0" />
            <path d="M1 12h29v16H1z" fill="#f6e7a8" />
            <path d="M8 28v-7q0-3 3-3h10q3 0 3 3v7h-4v-6h-8v6z" fill="#7fc0e8" stroke="#4a8fbe" />
          </svg>
        </TaskBtn>
        <StackEdge />
        <TaskBtn $w={59}><PaletteIcon s={34} /></TaskBtn>
        <TaskSpace />
        <Tray>
          <TrayIcon width="16" height="18" viewBox="0 0 16 18"><path d="M8 1q6 8 6 11a6 6 0 0 1-12 0Q2 9 8 1z" fill="#fff" stroke="#47596e" /><path d="M3 12h10a5 5 0 0 1-10 0z" fill="#b9cde0" /></TrayIcon>
          <TrayIcon width="17" height="18" viewBox="0 0 17 18"><path d="M2 1v16" stroke="#fff" strokeWidth="2" /><path d="M3 2h8v8H3z" fill="#e8eef4" stroke="#47596e" /><circle cx="11" cy="12" r="5" fill="#d8263a" /><path d="M9 10l4 4M13 10l-4 4" stroke="#fff" strokeWidth="1.500" /></TrayIcon>
          <TrayIcon width="17" height="18" viewBox="0 0 17 18"><rect x="2" y="4" width="8" height="10" fill="#576574" /><rect x="4" y="1" width="4" height="3" fill="#9aa6b2" /><circle cx="11" cy="12" r="5" fill="#1e9b2e" /><path d="M9 12l2 2 3-4" stroke="#fff" fill="none" strokeWidth="1.400" /></TrayIcon>
          <TrayIcon width="17" height="18" viewBox="0 0 17 18"><rect x="5.500" y="3.500" width="11" height="11" fill="none" stroke="#111" /><rect x="1" y="1" width="6" height="7" fill="#fff" stroke="#111" /><path d="M4 15h10" stroke="#fff" strokeWidth="2" /></TrayIcon>
          <TrayIcon width="17" height="18" viewBox="0 0 17 18"><path d="M1 6h3l4-4v14l-4-4H1z" fill="#fff" stroke="#47596e" /><path d="M10 6q2 3 0 6M12.500 4q3 5 0 10" fill="none" stroke="#fff" /></TrayIcon>
        </Tray>
        <Clock>오전 8:42<br />2018-07-17</Clock>
        <ShowDesk />
      </Taskbar>
    </Desktop>
  );
}
